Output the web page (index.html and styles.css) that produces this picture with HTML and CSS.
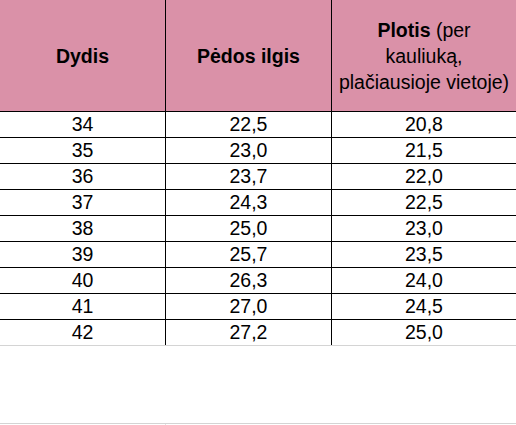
FILE: index.html
```
<!DOCTYPE html>
<html lang="lt">
<head>
<meta charset="utf-8">
<link rel="stylesheet" href="styles.css">
</head>
<body>
<div class="sheet">
  <div class="row head">
    <div class="cell"><b>Dydis</b></div>
    <div class="cell"><b>Pėdos ilgis</b></div>
    <div class="cell"><span><b>Plotis</b> (per<br>kauliuką,<br>plačiausioje vietoje)</span></div>
  </div>
  <div class="row"><div class="cell">34</div><div class="cell">22,5</div><div class="cell">20,8</div></div>
  <div class="row"><div class="cell">35</div><div class="cell">23,0</div><div class="cell">21,5</div></div>
  <div class="row"><div class="cell">36</div><div class="cell">23,7</div><div class="cell">22,0</div></div>
  <div class="row"><div class="cell">37</div><div class="cell">24,3</div><div class="cell">22,5</div></div>
  <div class="row"><div class="cell">38</div><div class="cell">25,0</div><div class="cell">23,0</div></div>
  <div class="row"><div class="cell">39</div><div class="cell">25,7</div><div class="cell">23,5</div></div>
  <div class="row"><div class="cell">40</div><div class="cell">26,3</div><div class="cell">24,0</div></div>
  <div class="row"><div class="cell">41</div><div class="cell">27,0</div><div class="cell">24,5</div></div>
  <div class="row last"><div class="cell">42</div><div class="cell">27,2</div><div class="cell">25,0</div></div>
  <div class="empty"></div>
  <div class="tail"><div class="tick"></div></div>
</div>
</body>
</html>
```
FILE: styles.css
```
* { box-sizing: border-box; }
html, body { margin: 0; padding: 0; background: #fff; }
body {
  width: 516px;
  height: 425px;
  overflow: hidden;
  font-family: "Liberation Sans", Arial, sans-serif;
  font-size: 19.5px;
  color: #000;
}
.sheet { width: 516px; }
.row {
  display: grid;
  grid-template-columns: 166px 166px 184px;
  height: 26px;
  border-top: 1px solid #000;
}
.row .cell {
  display: flex;
  align-items: center;
  justify-content: center;
  border-right: 1px solid #000;
  line-height: 25px;
  white-space: nowrap;
}
.row .cell:last-child { border-right: none; }
.row.head {
  height: 111px;
  border-top: none;
  background: #da91a8;
}
.row.head .cell { line-height: 26px; text-align: center; padding-top: 1px; }
.row.last { height: 27px; border-bottom: 1px solid #d4d4d4; }
.empty { height: 77px; }
.tail {
  border-top: 1px solid #d4d4d4;
  height: 2px;
}
.tick {
  width: 1px;
  height: 2px;
  margin-left: 165px;
  background: #e2e2e2;
}
```
